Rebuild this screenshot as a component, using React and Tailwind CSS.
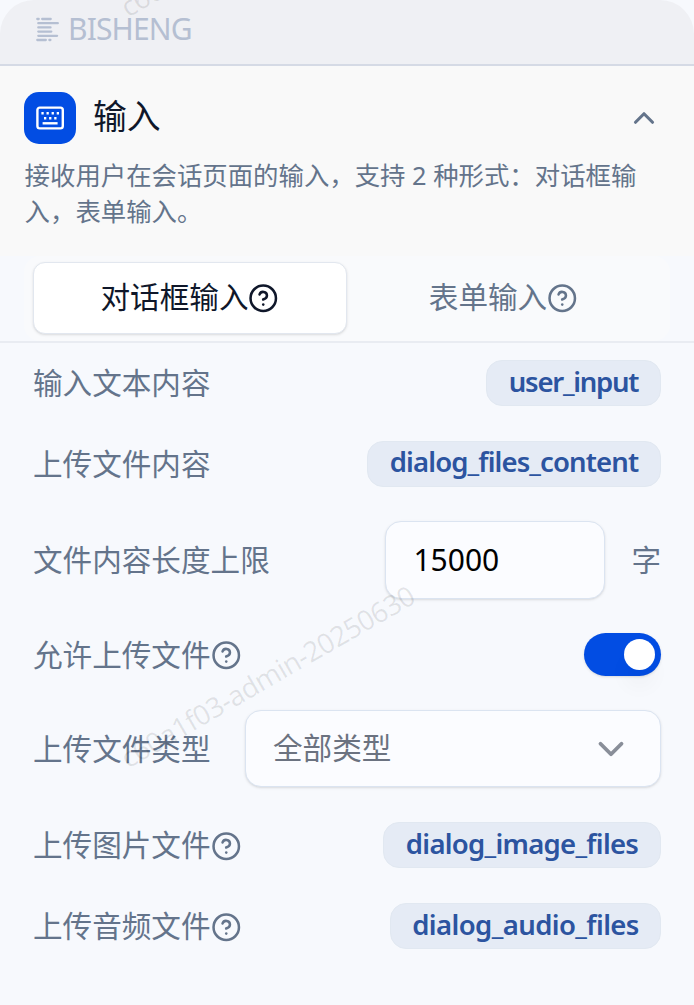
import { ChevronDown, ChevronUp, CircleHelp } from "lucide-react";

function Help() {
  return <CircleHelp className="mt-[2px] size-[30.5px] shrink-0" strokeWidth={2} />;
}

function Logo() {
  return (
    <svg className="mt-[2px] h-[26px] w-[24px] shrink-0" viewBox="0 0 24 26" fill="none" stroke="#b5bfd2" strokeWidth="2.3" strokeLinecap="round">
      <path d="M1.3 2h1.4M6.2 2h8.5M2.3 6.2h19.5M2.3 10.4h12.2M2.3 14.6h13M2.3 18.8h18.8M1.3 23h8.5M13.4 23h1" />
    </svg>
  );
}

function Keyboard() {
  return (
    <svg className="h-[24px] w-[28px]" viewBox="0 0 28 24" fill="none" stroke="#fff" strokeWidth="2.4">
      <rect x="1.4" y="1.6" width="25.4" height="20.8" rx="2.4" />
      <path d="M5.4 7.2h2.3M10.5 7.2h2.3M15.6 7.2h2.3M20.7 7.2h2.3M8 12.2h2.3M13.1 12.2h2.3M18.2 12.2h2.3" />
      <path d="M6.6 17.3h15" />
    </svg>
  );
}

function Badge({ children, className }) {
  return (
    <span className={`flex h-[46px] items-center justify-center rounded-[16px] border border-[#e1e8f1] bg-[#e5ebf5] pb-[3px] text-[27.5px] font-semibold text-[#2c54a0] ${className}`}>
      {children}
    </span>
  );
}

function Row({ label, help, height, children }) {
  return (
    <div className={`flex items-center justify-between ${height}`}>
      <div className="flex items-center">
        <span className="whitespace-nowrap">{label}</span>
        {help && <Help />}
      </div>
      {children}
    </div>
  );
}

export default function App() {
  return (
    <div className="relative h-[1005px] w-[694px] overflow-hidden bg-[#f7f9fd] font-['Noto_Sans','Noto_Sans_CJK_SC',sans-serif] text-[29.6px] leading-[44px] text-[#64748b]">
      <header className="flex h-[66px] items-center gap-[8px] rounded-t-[34px] border-b-2 border-[#d5dae5] bg-[#eff0f4] pb-[6px] pl-[36px] text-[#b5bfd2]">
        <Logo />
        <span className="text-[30px] tracking-[-0.85px]">BISHENG</span>
      </header>

      <section className="h-[190px] bg-[#f9f9f9] px-[24px] pt-[26px]">
        <div className="flex h-[52px] items-center">
          <div className="flex size-[52px] items-center justify-center rounded-[15px] bg-[#024de3]">
            <Keyboard />
          </div>
          <h1 className="ml-[17px] flex-1 pb-[4px] text-[33.8px] text-[#0f172a]">输入</h1>
          <ChevronUp className="mr-[9px] size-[34px]" strokeWidth={2.2} />
        </div>
        <p className="mt-[14px] pl-[0.6px] text-[25.4px] leading-[35.5px]">接收用户在会话页面的输入，支持 2 种形式：对话框输入，表单输入。</p>
      </section>

      <div className="flex h-[87px] border-b-2 border-[#e9ecf2] px-[24px]">
        <div className="grid h-[85px] w-full grid-cols-2 rounded-[16px] bg-[#f9fafc] pt-[6px] pr-[10px] pl-[9px]">
          <div className="flex h-[72px] items-center justify-center rounded-[12px] border border-[#e2e7ef] bg-white pb-[2px] text-[#0f172a] shadow-sm">
            对话框输入
            <Help />
          </div>
          <div className="flex h-[72px] items-center justify-center pb-[2px]">
            表单输入
            <Help />
          </div>
        </div>
      </div>

      <main className="px-[33px]">
        <Row label="输入文本内容" height="h-[80px]">
          <Badge className="w-[175px] tracking-[-1.27px]">user_input</Badge>
        </Row>
        <Row label="上传文件内容" height="h-[81px]">
          <Badge className="w-[294px] tracking-[-0.88px]">dialog_files_content</Badge>
        </Row>
        <Row label="文件内容长度上限" height="h-[112px]">
          <div className="flex items-center">
            <div className="mr-[26px] flex h-[78px] w-[220px] items-center rounded-[16px] border border-[#dbe4f1] bg-[#fbfcff] pl-[27px] text-[30px] text-black shadow-sm">15000</div>
            字
          </div>
        </Row>
        <Row label="允许上传文件" help height="h-[77px]">
          <div className="flex h-[43px] w-[77px] items-center justify-end rounded-full bg-[#024de3] px-[6px] shadow-sm">
            <span className="size-[31px] rounded-full bg-white shadow-[0_18px_20px_#00000008]" />
          </div>
        </Row>
        <Row label="上传文件类型" height="h-[111px]">
          <div className="flex h-[77px] w-[416px] items-center justify-between rounded-[16px] border border-[#dbe4f1] bg-[#fbfcff] pr-[28px] pl-[27px] text-[#6b7280] shadow-sm">
            <span className="pb-[2px]">全部类型</span>
            <ChevronDown className="size-[42px] text-[#898e99]" strokeWidth={2.2} />
          </div>
        </Row>
        <Row label="上传图片文件" help height="h-[82px]">
          <Badge className="w-[278px] tracking-[-0.72px]">dialog_image_files</Badge>
        </Row>
        <Row label="上传音频文件" help height="h-[80px]">
          <Badge className="w-[271px] tracking-[-0.6px]">dialog_audio_files</Badge>
        </Row>
      </main>

      <div className="pointer-events-none absolute top-[654px] left-[97px] w-[340px] -rotate-[30deg] text-center text-[28px] tracking-[-0.65px] whitespace-nowrap text-black/9">c60a1f03-admin-20250630</div>
      <div className="pointer-events-none absolute top-[-97px] left-[97px] w-[340px] -rotate-[30deg] text-center text-[28px] tracking-[-0.65px] whitespace-nowrap text-black/9">c60a1f03-admin-20250630</div>
    </div>
  );
}
